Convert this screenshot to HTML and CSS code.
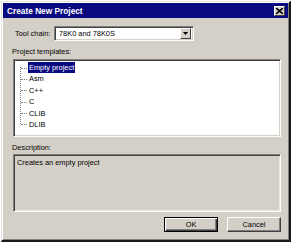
FILE: index.html
```html
<!DOCTYPE html>
<html>
<head>
<meta charset="utf-8">
<link rel="stylesheet" href="styles.css">
</head>
<body>
<div class="dialog">
  <div class="titlebar">
    <span class="title">Create New Project</span>
    <span class="close">
      <svg width="7" height="6" viewBox="0 0 7 6"><path d="M0 0L7 6M7 0L0 6" stroke="#000" stroke-width="1.6"/></svg>
    </span>
  </div>
  <div class="content">
    <div class="row">
      <span class="label tc">Tool chain:</span>
      <div class="combo">
        <span class="combo-text">78K0 and 78K0S</span>
        <span class="combo-btn"><svg width="5" height="3" viewBox="0 0 5 3"><path d="M0 0H5L2.5 3Z" fill="#000"/></svg></span>
      </div>
    </div>
    <div class="label sect">Project templates:</div>
    <div class="tree">
      <ul class="items">
        <li><span class="sel">Empty project</span></li>
        <li><span>Asm</span></li>
        <li><span>C++</span></li>
        <li><span>C</span></li>
        <li><span>CLIB</span></li>
        <li><span>DLIB</span></li>
      </ul>
    </div>
    <div class="label sect desc-label">Description:</div>
    <div class="desc">Creates an empty project</div>
    <div class="buttons">
      <button class="btn default">OK</button>
      <button class="btn">Cancel</button>
    </div>
  </div>
</div>
</body>
</html>
```
FILE: styles.css
```css
html, body {
  margin: 0;
  padding: 0;
  background: #ffffff;
}
body {
  font-family: "Liberation Sans", Arial, sans-serif;
  font-size: 7.4px;
  color: #000;
}
.dialog {
  box-sizing: border-box;
  margin: 1px 0 0 1px;
  width: 290px;
  height: 241px;
  background: #d4d0c8;
  border-top: 1px solid #e4e2dc;
  border-left: 1px solid #e4e2dc;
  border-right: 2px solid #1a1a1a;
  border-bottom: 2px solid #1a1a1a;
  box-shadow: inset 1px 1px 0 #ffffff, inset -1px -1px 0 #808080;
  padding: 1px 0 0 1px;
  display: flex;
  flex-direction: column;
}
.titlebar {
  height: 15px;
  margin: 0 1px 0 0;
  background: #0a0a80;
  display: flex;
  align-items: center;
  justify-content: space-between;
  padding: 0 3px 0 4px;
}
.title {
  color: #fff;
  font-weight: bold;
  font-size: 8.3px;
}
.close {
  box-sizing: border-box;
  width: 11px;
  height: 10px;
  background: #d4d0c8;
  border-top: 1px solid #fff;
  border-left: 1px solid #fff;
  border-right: 1px solid #404040;
  border-bottom: 1px solid #404040;
  display: flex;
  align-items: center;
  justify-content: center;
}
.content {
  flex: 1;
  padding: 8px 8px 0 10px;
  display: flex;
  flex-direction: column;
}
.row {
  display: flex;
  align-items: center;
  height: 15px;
}
.label {
  line-height: 9px;
  white-space: nowrap;
}
.tc {
  margin-left: 2px;
  width: 39px;
}
.combo {
  box-sizing: border-box;
  width: 140px;
  height: 15px;
  background: #fff;
  border-top: 1px solid #808080;
  border-left: 1px solid #808080;
  border-right: 1px solid #fff;
  border-bottom: 1px solid #fff;
  box-shadow: inset 1px 1px 0 #404040, inset -1px -1px 0 #d4d0c8;
  display: flex;
  align-items: center;
  padding: 2px;
}
.combo-text {
  flex: 1;
  padding-left: 2px;
}
.combo-btn {
  box-sizing: border-box;
  width: 11px;
  height: 11px;
  background: #d4d0c8;
  border-top: 1px solid #fff;
  border-left: 1px solid #fff;
  border-right: 1px solid #404040;
  border-bottom: 1px solid #404040;
  display: flex;
  align-items: center;
  justify-content: center;
}
.sect {
  margin: 6px 0 0 -1px;
}
.tree {
  box-sizing: border-box;
  margin-top: 3px;
  height: 78px;
  background: #fff;
  border-top: 1px solid #808080;
  border-left: 1px solid #808080;
  border-right: 1px solid #fff;
  border-bottom: 1px solid #fff;
  box-shadow: inset 1px 1px 0 #404040, inset -1px -1px 0 #d4d0c8;
  padding: 2px 0 0 0;
}
.items {
  list-style: none;
  margin: 0;
  padding: 0;
  position: relative;
}
.items::before {
  content: "";
  position: absolute;
  left: 6px;
  top: 5px;
  height: 57px;
  border-left: 1px dotted #808080;
}
.items li {
  position: relative;
  height: 11.4px;
  line-height: 11.4px;
  padding-left: 14px;
}
.items li::before {
  content: "";
  position: absolute;
  left: 7px;
  top: 5.5px;
  width: 6px;
  border-top: 1px dotted #808080;
}
.items li span {
  padding: 1px 1px;
}
.items li .sel {
  background: #0a0a80;
  color: #fff;
}
.desc-label {
  margin-top: 6px;
}
.desc {
  box-sizing: border-box;
  margin-top: 2px;
  height: 58px;
  background: #d4d0c8;
  border-top: 1px solid #808080;
  border-left: 1px solid #808080;
  border-right: 1px solid #fff;
  border-bottom: 1px solid #fff;
  box-shadow: inset 1px 1px 0 #404040, inset -1px -1px 0 #e8e6e0;
  padding: 3px 3px;
  line-height: 9px;
}
.buttons {
  display: flex;
  justify-content: flex-end;
  gap: 9px;
  margin-top: 5px;
}
.btn {
  box-sizing: border-box;
  width: 54px;
  height: 15px;
  margin: 0;
  padding: 0;
  font-family: "Liberation Sans", Arial, sans-serif;
  font-size: 7.4px;
  color: #000;
  background: #d4d0c8;
  border-top: 1px solid #fff;
  border-left: 1px solid #fff;
  border-right: 1px solid #404040;
  border-bottom: 1px solid #404040;
  box-shadow: inset -1px -1px 0 #808080;
}
.btn.default {
  border: 1px solid #000;
  box-shadow: inset 1px 1px 0 #fff, inset -1px -1px 0 #404040, inset -2px -2px 0 #808080;
}
```
